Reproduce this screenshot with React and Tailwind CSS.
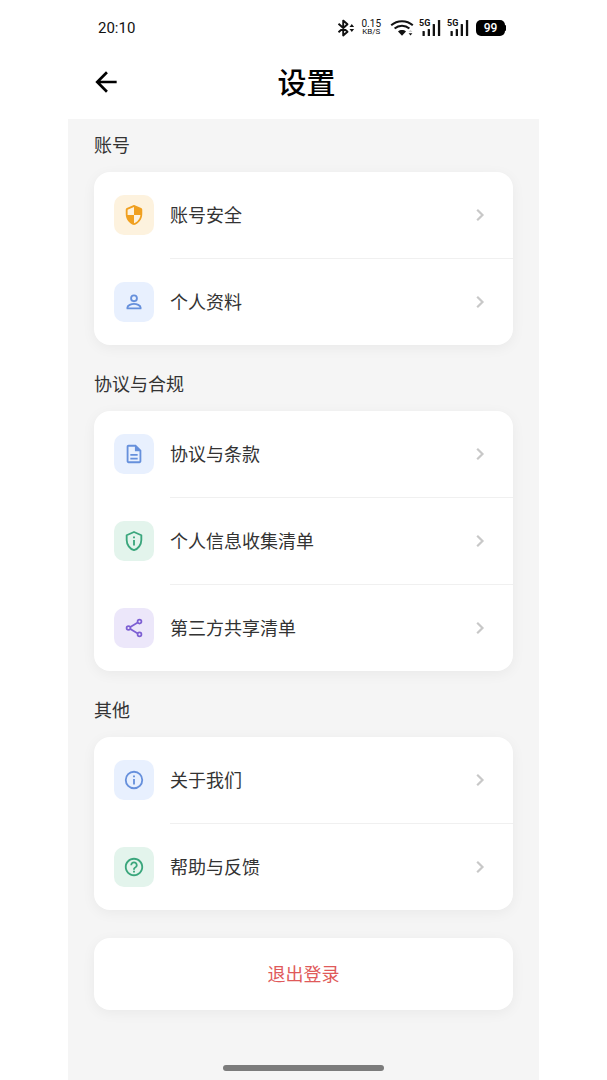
import { MdArrowBack } from "react-icons/md";

const TONES = {
  amber: "bg-[#fdf2de] text-[#f0a020]",
  blue: "bg-[#e8f0fe] text-[#6690dc]",
  green: "bg-[#e3f4ec] text-[#3aa67c]",
  purple: "bg-[#ece7fa] text-[#7d5fd3]",
};

const SECTIONS = [
  {
    title: "账号",
    items: [
      { label: "账号安全", tone: "amber", Icon: SecurityIcon },
      { label: "个人资料", tone: "blue", Icon: PersonIcon },
    ],
  },
  {
    title: "协议与合规",
    items: [
      { label: "协议与条款", tone: "blue", Icon: DocumentIcon },
      { label: "个人信息收集清单", tone: "green", Icon: PrivacyIcon },
      { label: "第三方共享清单", tone: "purple", Icon: ShareIcon },
    ],
  },
  {
    title: "其他",
    items: [
      { label: "关于我们", tone: "blue", Icon: InfoIcon },
      { label: "帮助与反馈", tone: "green", Icon: HelpIcon },
    ],
  },
];

function SecurityIcon() {
  return (
    <svg className="size-[22px]" viewBox="0 0 24 24" fill="currentColor">
      <path d="M11.19 1.36l-7 3.11C3.47 4.79 3 5.51 3 6.3V11c0 5.55 3.84 10.74 9 12 5.16-1.26 9-6.45 9-12V6.3c0-.79-.47-1.51-1.19-1.83l-7-3.11c-.51-.23-1.11-.23-1.62 0zM12 11.99h7c-.53 4.12-3.28 7.79-7 8.94V12H5V6.3l7-3.11v8.8z" />
    </svg>
  );
}

function PersonIcon() {
  return (
    <svg className="size-[22px]" viewBox="0 0 24 24" fill="none" stroke="currentColor" strokeWidth="2">
      <circle cx="12" cy="8" r="3.2" />
      <path d="M4.800 19v-1c0-2.300 4.400-4 7.200-4s7.200 1.700 7.200 4v1z" strokeLinejoin="round" />
    </svg>
  );
}

function DocumentIcon() {
  return (
    <svg className="size-[22px]" viewBox="0 0 24 24" fill="currentColor">
      <path d="M8 16h8v2H8zm0-4h8v2H8zm6-10H6c-1.1 0-2 .9-2 2v16c0 1.1.89 2 1.99 2H18c1.1 0 2-.9 2-2V8l-6-6zm4 18H6V4h7v5h5v11z" />
    </svg>
  );
}

function PrivacyIcon() {
  return (
    <svg className="size-[22px]" viewBox="0 0 24 24" fill="none" stroke="currentColor" strokeWidth="2">
      <path d="M12 2.2L4 5.75V11c0 5 3.4 9.7 8 11 4.6-1.3 8-6 8-11V5.75z" strokeLinejoin="round" />
      <path d="M12 11v6M12 7v2" />
    </svg>
  );
}

function ShareIcon() {
  return (
    <svg className="size-[22px]" viewBox="0 0 24 24" fill="none" stroke="currentColor" strokeWidth="1.9">
      <circle cx="18" cy="5" r="2.1" />
      <circle cx="6" cy="12" r="2.1" />
      <circle cx="18" cy="19" r="2.1" />
      <path d="M8 10.9l8.1-4.8M8 13.1l8.1 4.8" />
    </svg>
  );
}

function InfoIcon() {
  return (
    <svg className="size-[22px]" viewBox="0 0 24 24" fill="none" stroke="currentColor" strokeWidth="2">
      <circle cx="12" cy="12" r="9" />
      <path d="M12 11v6M12 7v2" />
    </svg>
  );
}

function HelpIcon() {
  return (
    <svg className="size-[22px]" viewBox="0 0 24 24" fill="currentColor">
      <path d="M11 18h2v-2h-2v2zm1-16C6.48 2 2 6.48 2 12s4.48 10 10 10 10-4.48 10-10S17.52 2 12 2zm0 18c-4.41 0-8-3.59-8-8s3.59-8 8-8 8 3.59 8 8-3.59 8-8 8zm0-14c-2.21 0-4 1.79-4 4h2c0-1.1.9-2 2-2s2 .9 2 2c0 2-3 1.75-3 5h2c0-2.25 3-2.5 3-5 0-2.21-1.79-4-4-4z" />
    </svg>
  );
}

function ChevronIcon() {
  return (
    <svg className="size-6" viewBox="0 0 24 24" fill="none" stroke="#c8c8c8" strokeWidth="2.2">
      <path d="M9.200 6.700l5.300 5.300-5.300 5.300" />
    </svg>
  );
}

function BluetoothIcon() {
  return (
    <svg className="h-[18px] w-[18px]" viewBox="0 0 18 18" fill="none" stroke="#111">
      <path d="M1.5 4.8l9 8L6.2 16.4V1.6l4.3 3.6-9 8" strokeWidth="1.9" strokeLinejoin="round" />
      <path d="M12.5 8l2.3-3 2.3 3zM12.5 10l2.3 3 2.3-3z" fill="#111" stroke="none" />
    </svg>
  );
}

function WifiIcon() {
  return (
    <svg className="h-[18px] w-6" viewBox="0 0 24 18" fill="none" stroke="#111" strokeWidth="2">
      <path d="M1.2 6.2c6-5.4 15.6-5.4 21.6 0M4.6 9.6c4.2-3.7 10.6-3.7 14.8 0" />
      <path d="M8 12.400c2.300-1.900 5.700-1.900 8 0l-4 4.400z" fill="#111" stroke="none" />
      <path d="M18.600 13l1.900-2.300 1.900 2.300z" fill="#ccc" stroke="none" />
      <path d="M18.600 14.200l1.900 2.300 1.900-2.300z" fill="#111" stroke="none" />
    </svg>
  );
}

function Signal() {
  return (
    <span className="relative block h-[18px] w-[22px]">
      <span className="absolute left-0 top-0 text-[9px] leading-[8px] font-bold">5G</span>
      <svg className="h-[18px] w-[22px]" viewBox="0 0 22 18" fill="#111">
        <rect x="3.500" y="12" width="2.300" height="5" rx="0.600" />
        <rect x="8.700" y="10" width="2.300" height="7" rx="0.600" />
        <rect x="13.700" y="5" width="2.300" height="12" rx="0.600" />
        <rect x="18.900" y="1" width="2.300" height="16" rx="0.600" />
      </svg>
    </span>
  );
}

function StatusBar() {
  return (
    <div className="flex h-[55px] items-center justify-between pl-[30px] pr-[33px] font-[Roboto,sans-serif] text-[#111]">
      <span className="text-[15px] leading-5">20:10</span>
      <div className="flex items-center">
        <BluetoothIcon />
        <div className="ml-[7px] flex flex-col text-center">
          <span className="text-[10px] leading-[9px]">0.15</span>
          <span className="text-[8px] leading-[8px]">KB/S</span>
        </div>
        <span className="ml-[9px]">
          <WifiIcon />
        </span>
        <span className="ml-[5px]">
          <Signal />
        </span>
        <span className="ml-[6px]">
          <Signal />
        </span>
        <span className="ml-[7px] flex h-4 w-[29px] items-center justify-center rounded-[5px] bg-black text-[12px] leading-4 font-medium text-white">
          99
        </span>
        <span className="h-[6px] w-px rounded-r bg-black" />
      </div>
    </div>
  );
}

function SettingRow({ label, tone, Icon }) {
  return (
    <button type="button" className="flex h-[86px] w-full items-center pl-5 pr-[21px] text-left">
      <span className={`flex size-10 shrink-0 items-center justify-center rounded-[10px] ${TONES[tone]}`}>
        <Icon />
      </span>
      <span className="ml-4 flex-1 pb-[2px] text-[18px] leading-7 text-[#333]">{label}</span>
      <ChevronIcon />
    </button>
  );
}

export default function App() {
  return (
    <div className="min-h-screen bg-white font-['Noto_Sans_CJK_SC',sans-serif]">
      <div className="mx-auto flex min-h-screen w-full max-w-[471px] flex-col bg-[#f5f5f5]">
        <header className="bg-white pb-[10px]">
          <StatusBar />
          <div className="grid h-[54px] grid-cols-[1fr_auto_1fr] items-center pl-[22px] pr-4">
            <button type="button" aria-label="返回" className="justify-self-start text-black">
              <MdArrowBack className="size-8" />
            </button>
            <h1 className="pb-[2px] text-[29px] leading-10 font-medium text-black">设置</h1>
          </div>
        </header>

        <main className="px-[26px] pt-[11px]">
          <div className="flex flex-col gap-6">
            {SECTIONS.map((section) => (
              <section key={section.title}>
                <h2 className="mb-[14px] text-[18px] leading-7 text-[#333]">{section.title}</h2>
                <ul className="rounded-2xl bg-white shadow-[0_3px_14px_rgba(0,0,0,0.05)]">
                  {section.items.map((item, i) => (
                    <li key={item.label}>
                      {i > 0 && <div className="ml-[76px] h-px bg-[#f0f0f0]" />}
                      <SettingRow {...item} />
                    </li>
                  ))}
                </ul>
              </section>
            ))}
          </div>

          <button
            type="button"
            className="mt-7 h-[72px] w-full rounded-2xl bg-white pb-[2px] text-[18px] leading-7 text-[#e05a5a] shadow-[0_3px_14px_rgba(0,0,0,0.05)]"
          >
            退出登录
          </button>
        </main>

        {/* Home indicator */}
        <div className="mx-auto mt-auto mb-[9px] h-[6px] w-[161px] rounded-full bg-[#7c7c7c]" />
      </div>
    </div>
  );
}
